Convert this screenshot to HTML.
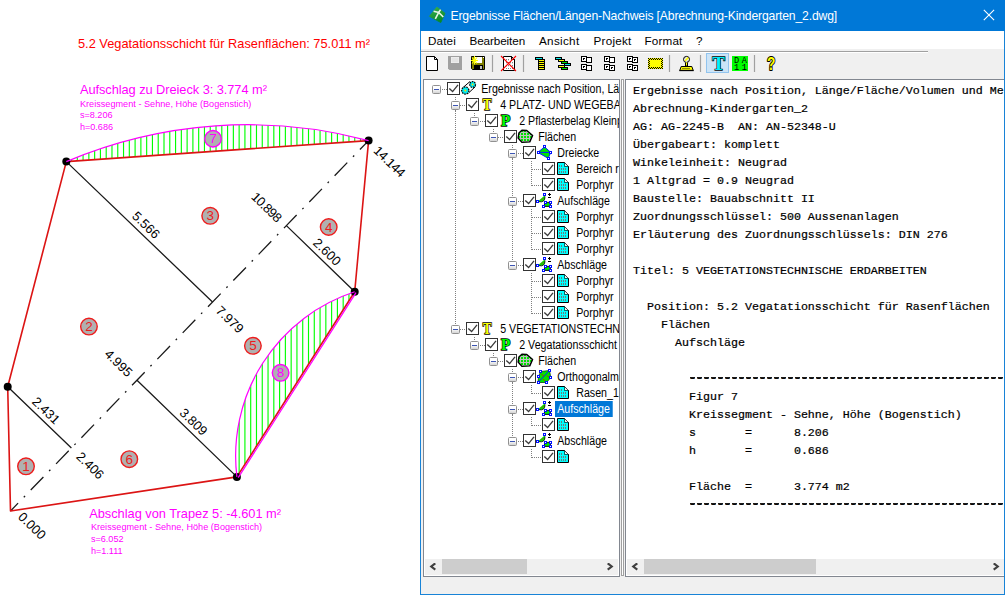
<!DOCTYPE html>
<html lang="de"><head><meta charset="utf-8"><title>Ergebnisse Flächen/Längen-Nachweis</title>
<style>
html,body{margin:0;padding:0;background:#fff;}
body{width:1005px;height:595px;position:relative;overflow:hidden;font-family:"Liberation Sans",sans-serif;}
#win{position:absolute;left:420px;top:0;width:585px;height:595px;background:#f0f0f0;box-sizing:border-box;border:1px solid #1883d7;border-top:none;}
#title{position:absolute;left:-1px;top:0;width:585px;height:31px;background:#0078d7;color:#fff;}
#title span{position:absolute;left:30.5px;top:9px;font-size:12.2px;white-space:nowrap;letter-spacing:-0.17px}
#menu{position:absolute;left:0;top:31px;width:583px;height:18px;background:#fff;font-size:11.7px;letter-spacing:-0.1px;color:#000;}
#menu span{position:absolute;top:3px;white-space:nowrap}

#tree{position:absolute;left:-421px;top:0;width:0;height:0}
#treepane{position:absolute;left:2px;top:79px;width:197px;height:498px;background:#fff;border:1px solid #828790;box-sizing:border-box;overflow:hidden}
#treepane #tree{left:-424px;top:-80px}
#tree i{position:absolute;display:block}
#tree .vl{width:1px;background:repeating-linear-gradient(to bottom,#808080 0 1px,transparent 1px 2px)}
#tree .hl{height:1px;background:repeating-linear-gradient(to right,#808080 0 1px,transparent 1px 2px)}
#tree .ex{width:7px;height:7px;border:1px solid #919191;background:linear-gradient(#fff 40%,#d4d4d4);border-radius:1.5px}
#tree .ex:after{content:"";position:absolute;left:1px;top:3px;width:5px;height:1px;background:#3c55b4}
#tree .cb,#tree .ic{position:absolute}
#tree .tt{position:absolute;font-size:12px;line-height:16px;height:16px;padding:0 2.8px 0 2.5px;white-space:nowrap;color:#000;transform:scaleX(.888);transform-origin:0 0}
#tree .tt.sel{background:#0078d7;color:#fff}
#rpane{position:absolute;left:204px;top:79px;width:379px;height:498px;background:#fff;border:1px solid #828790;border-right:none;box-sizing:border-box;overflow:hidden}
#rpane pre{margin:0;position:absolute;left:7px;top:2.2px;font-family:"Liberation Mono",monospace;font-size:11.667px;line-height:18px;color:#000;-webkit-text-stroke:0.22px #000;}
#rpane .dl{display:inline-block;height:18px;vertical-align:top;position:relative;top:-0.8px;background:repeating-linear-gradient(to right,transparent 0 0.8px,#1a1a1a 0.8px 6.2px,transparent 6.2px 7px) 0 8.1px/100% 1.5px no-repeat}
.hsb{position:absolute;height:16px;background:#f0f0f0}
.hsb b{position:absolute;top:0;height:15px;background:#cdcdcd}
.hsb svg{position:absolute;top:4px}
#split{position:absolute;left:199px;top:79px;width:5px;height:498px;background:#f0f0f0}
#split:before{content:"";position:absolute;left:1px;top:0;width:1px;height:495px;background:#fff;border:1px solid #a0a0a0}
</style></head><body>
<svg id="dwg" width="420" height="595" viewBox="0 0 420 595" style="position:absolute;left:0;top:0">
<defs>
<clipPath id="c7"><path d="M66.3,161.6 A466.3,466.3 0 0 1 368.6,140.6 Z"/></clipPath>
<clipPath id="c8"><path d="M236.9,476.9 A172.8,172.8 0 0 1 354.7,291.8 Z"/></clipPath>
</defs>
<path d="M-38.30,100V500M-32.52,100V500M-26.74,100V500M-20.96,100V500M-15.18,100V500M-9.40,100V500M-3.62,100V500M2.16,100V500M7.94,100V500M13.72,100V500M19.50,100V500M25.28,100V500M31.06,100V500M36.84,100V500M42.62,100V500M48.40,100V500M54.18,100V500M59.96,100V500M65.74,100V500M71.52,100V500M77.30,100V500M83.08,100V500M88.86,100V500M94.64,100V500M100.42,100V500M106.20,100V500M111.98,100V500M117.76,100V500M123.54,100V500M129.32,100V500M135.10,100V500M140.88,100V500M146.66,100V500M152.44,100V500M158.22,100V500M164.00,100V500M169.78,100V500M175.56,100V500M181.34,100V500M187.12,100V500M192.90,100V500M198.68,100V500M204.46,100V500M210.24,100V500M216.02,100V500M221.80,100V500M227.58,100V500M233.36,100V500M239.14,100V500M244.92,100V500M250.70,100V500M256.48,100V500M262.26,100V500M268.04,100V500M273.82,100V500M279.60,100V500M285.38,100V500M291.16,100V500M296.94,100V500M302.72,100V500M308.50,100V500M314.28,100V500M320.06,100V500M325.84,100V500M331.62,100V500M337.40,100V500M343.18,100V500M348.96,100V500M354.74,100V500M360.52,100V500M366.30,100V500M372.08,100V500M377.86,100V500M383.64,100V500M389.42,100V500M395.20,100V500M400.98,100V500M406.76,100V500M412.54,100V500M418.32,100V500" stroke="#00ff00" stroke-width="1.15" fill="none" clip-path="url(#c7)"/>
<path d="M-38.30,100V500M-32.52,100V500M-26.74,100V500M-20.96,100V500M-15.18,100V500M-9.40,100V500M-3.62,100V500M2.16,100V500M7.94,100V500M13.72,100V500M19.50,100V500M25.28,100V500M31.06,100V500M36.84,100V500M42.62,100V500M48.40,100V500M54.18,100V500M59.96,100V500M65.74,100V500M71.52,100V500M77.30,100V500M83.08,100V500M88.86,100V500M94.64,100V500M100.42,100V500M106.20,100V500M111.98,100V500M117.76,100V500M123.54,100V500M129.32,100V500M135.10,100V500M140.88,100V500M146.66,100V500M152.44,100V500M158.22,100V500M164.00,100V500M169.78,100V500M175.56,100V500M181.34,100V500M187.12,100V500M192.90,100V500M198.68,100V500M204.46,100V500M210.24,100V500M216.02,100V500M221.80,100V500M227.58,100V500M233.36,100V500M239.14,100V500M244.92,100V500M250.70,100V500M256.48,100V500M262.26,100V500M268.04,100V500M273.82,100V500M279.60,100V500M285.38,100V500M291.16,100V500M296.94,100V500M302.72,100V500M308.50,100V500M314.28,100V500M320.06,100V500M325.84,100V500M331.62,100V500M337.40,100V500M343.18,100V500M348.96,100V500M354.74,100V500M360.52,100V500M366.30,100V500M372.08,100V500M377.86,100V500M383.64,100V500M389.42,100V500M395.20,100V500M400.98,100V500M406.76,100V500M412.54,100V500M418.32,100V500" stroke="#00ff00" stroke-width="1.15" fill="none" clip-path="url(#c8)"/>
<path d="M7.7,386.8L71.4,448.0 M66.3,161.6L212.5,302.0 M236.9,476.9L137.0,380.2 M354.7,291.8L286.4,225.6" stroke="#1a1a1a" stroke-width="1.3" fill="none"/>
<path d="M10.5,511.0L368.6,140.6" stroke="#1a1a1a" stroke-width="1.3" fill="none" stroke-dasharray="18.21 8.21 1.8 8.21" stroke-dashoffset="7.3"/>
<path d="M10.5,511.0L7.7,386.8L66.3,161.6L368.6,140.6L354.7,291.8L236.9,476.9Z" stroke="#dc1414" stroke-width="1.6" fill="none" stroke-linejoin="round"/>
<circle cx="66.3" cy="161.6" r="4" fill="#000"/>
<circle cx="368.6" cy="140.6" r="4" fill="#000"/>
<circle cx="354.7" cy="291.8" r="4" fill="#000"/>
<circle cx="236.9" cy="476.9" r="4" fill="#000"/>
<circle cx="7.7" cy="386.8" r="4" fill="#000"/>
<path d="M66.3,161.6 A466.3,466.3 0 0 1 368.6,140.6" stroke="#ff00ff" stroke-width="1.2" fill="none"/>
<path d="M236.9,476.9 A172.8,172.8 0 0 1 354.7,291.8" stroke="#ff00ff" stroke-width="1.2" fill="none"/>
<path d="M238.20000000000002,477.7 L356.0,292.6" stroke="#ff00ff" stroke-width="1.3" fill="none"/>
<circle cx="26.0" cy="466.3" r="8.3" fill="#b0b0b0" stroke="#ee1c1c" stroke-width="1.4"/>
<text x="26.0" y="470.80" text-anchor="middle" font-family="Liberation Sans, sans-serif" font-size="13.5" fill="#ee1c1c">1</text>
<circle cx="129.3" cy="459.2" r="8.3" fill="#b0b0b0" stroke="#ee1c1c" stroke-width="1.4"/>
<text x="129.3" y="463.70" text-anchor="middle" font-family="Liberation Sans, sans-serif" font-size="13.5" fill="#ee1c1c">6</text>
<circle cx="88.95" cy="326.6" r="8.3" fill="#b0b0b0" stroke="#ee1c1c" stroke-width="1.4"/>
<text x="88.95" y="331.10" text-anchor="middle" font-family="Liberation Sans, sans-serif" font-size="13.5" fill="#ee1c1c">2</text>
<circle cx="210.2" cy="215.8" r="8.3" fill="#b0b0b0" stroke="#ee1c1c" stroke-width="1.4"/>
<text x="210.2" y="220.30" text-anchor="middle" font-family="Liberation Sans, sans-serif" font-size="13.5" fill="#ee1c1c">3</text>
<circle cx="328.7" cy="227" r="8.3" fill="#b0b0b0" stroke="#ee1c1c" stroke-width="1.4"/>
<text x="328.7" y="231.50" text-anchor="middle" font-family="Liberation Sans, sans-serif" font-size="13.5" fill="#ee1c1c">4</text>
<circle cx="252.9" cy="345.8" r="8.3" fill="#b0b0b0" stroke="#ee1c1c" stroke-width="1.4"/>
<text x="252.9" y="350.30" text-anchor="middle" font-family="Liberation Sans, sans-serif" font-size="13.5" fill="#ee1c1c">5</text>
<circle cx="213" cy="138.75" r="8.3" fill="#b0b0b0" stroke="#ff00ff" stroke-width="1.4"/>
<text x="213" y="143.25" text-anchor="middle" font-family="Liberation Sans, sans-serif" font-size="13.5" fill="#ff00ff">7</text>
<circle cx="280.6" cy="372.8" r="8.3" fill="#b0b0b0" stroke="#ff00ff" stroke-width="1.4"/>
<text x="280.6" y="377.30" text-anchor="middle" font-family="Liberation Sans, sans-serif" font-size="13.5" fill="#ff00ff">8</text>
<text transform="translate(43.0,413.8) rotate(44.03)" text-anchor="middle" font-family="Liberation Sans, sans-serif" font-size="13" fill="#000">2.431</text>
<text transform="translate(142.9,228.2) rotate(44.03)" text-anchor="middle" font-family="Liberation Sans, sans-serif" font-size="13" fill="#000">5.566</text>
<text transform="translate(190.4,425.0) rotate(44.03)" text-anchor="middle" font-family="Liberation Sans, sans-serif" font-size="13" fill="#000">3.809</text>
<text transform="translate(324.0,255.1) rotate(44.03)" text-anchor="middle" font-family="Liberation Sans, sans-serif" font-size="13" fill="#000">2.600</text>
<!--stations-->
<text transform="translate(17.3,517.7) rotate(44.03)" text-anchor="start" font-family="Liberation Sans, sans-serif" font-size="13" fill="#000">0.000</text>
<text transform="translate(75.4,457.4) rotate(44.03)" text-anchor="start" font-family="Liberation Sans, sans-serif" font-size="13" fill="#000">2.406</text>
<text transform="translate(215.0,311.4) rotate(44.03)" text-anchor="start" font-family="Liberation Sans, sans-serif" font-size="13" fill="#000">7.979</text>
<text transform="translate(372.7,151.5) rotate(44.03)" text-anchor="start" font-family="Liberation Sans, sans-serif" font-size="13" fill="#000" textLength="38.3" lengthAdjust="spacing">14.144</text>
<text transform="translate(127.2,377.7) rotate(44.03)" text-anchor="end" font-family="Liberation Sans, sans-serif" font-size="13" fill="#000">4.995</text>
<text transform="translate(276.7,223.2) rotate(44.03)" text-anchor="end" font-family="Liberation Sans, sans-serif" font-size="13" fill="#000" textLength="36.6" lengthAdjust="spacing">10.898</text>
<text x="78" y="47.6" font-family="Liberation Sans, sans-serif" font-size="12.8" fill="#ff0000" textLength="292" lengthAdjust="spacing">5.2 Vegatationsschicht für Rasenflächen: 75.011 m²</text>
<text x="79.9" y="94.3" font-family="Liberation Sans, sans-serif" font-size="12.8" fill="#ff00ff" textLength="187" lengthAdjust="spacing">Aufschlag zu Dreieck 3: 3.774 m²</text>
<text x="79.9" y="106.7" font-family="Liberation Sans, sans-serif" font-size="9.1" fill="#ff00ff" textLength="171.4" lengthAdjust="spacing">Kreissegment - Sehne, Höhe (Bogenstich)</text>
<text x="79.9" y="118.4" font-family="Liberation Sans, sans-serif" font-size="9.1" fill="#ff00ff">s=8.206</text>
<text x="79.9" y="130.4" font-family="Liberation Sans, sans-serif" font-size="9.1" fill="#ff00ff">h=0.686</text>
<text x="89.2" y="517.5" font-family="Liberation Sans, sans-serif" font-size="12.8" fill="#ff00ff" textLength="191.8" lengthAdjust="spacing">Abschlag von Trapez 5: -4.601 m²</text>
<text x="90.9" y="529.9" font-family="Liberation Sans, sans-serif" font-size="9.1" fill="#ff00ff" textLength="171.2" lengthAdjust="spacing">Kreissegment - Sehne, Höhe (Bogenstich)</text>
<text x="90.9" y="541.6" font-family="Liberation Sans, sans-serif" font-size="9.1" fill="#ff00ff">s=6.052</text>
<text x="90.9" y="553.6" font-family="Liberation Sans, sans-serif" font-size="9.1" fill="#ff00ff">h=1.111</text>
</svg>
<div id="win">
<div id="title"><svg style="position:absolute;left:0;top:0" width="40" height="31" viewBox="420 0 40 31"><defs><linearGradient id="gi" x1="0" y1="0" x2="0.4" y2="1"><stop offset="0" stop-color="#3cb050"/><stop offset="1" stop-color="#0a8a26"/></linearGradient></defs><path d="M436.9,7L445,13.3L440.8,22.6L429.4,16.3Z" fill="url(#gi)" stroke="url(#gi)" stroke-width="0.8" stroke-linejoin="round"/><path d="M433.6,11.2L438.7,12.4L443.3,17M440.6,9.6L438.7,12.4L435.3,18.9" stroke="#e8f4e8" stroke-width="1.6" fill="none"/></svg><span>Ergebnisse Flächen/Längen-Nachweis [Abrechnung-Kindergarten_2.dwg]</span>
<svg style="position:absolute;left:563px;top:9px" width="13" height="13" viewBox="0 0 13 13"><path d="M0.8,0.8L11.1,11.1M11.1,0.8L0.8,11.1" stroke="#fff" stroke-width="1.1"/></svg>
</div>
<div id="menu"><span style="left:7px;letter-spacing:.14px">Datei</span><span style="left:48.5px">Bearbeiten</span><span style="left:118px;letter-spacing:.3px">Ansicht</span><span style="left:172.5px;letter-spacing:.23px">Projekt</span><span style="left:223.5px;letter-spacing:.17px">Format</span><span style="left:275px">?</span></div>
<svg id="tbsvg" width="583" height="30" viewBox="421 49 583 30" style="position:absolute;left:0;top:49px">
<path d="M421,51.5H928" stroke="#a0a0a0" stroke-width="1"/><path d="M421,52.5H928" stroke="#fff" stroke-width="1"/>
<path d="M492.5,55V72" stroke="#a0a0a0" stroke-width="1.2"/>
<path d="M523.5,55V72" stroke="#a0a0a0" stroke-width="1.2"/>
<path d="M669.5,55V72" stroke="#a0a0a0" stroke-width="1.2"/>
<path d="M700.5,55V72" stroke="#a0a0a0" stroke-width="1.2"/>
<path d="M754.5,55V72" stroke="#a0a0a0" stroke-width="1.2"/>
<path d="M426.5,56.5H434.5L437.5,59.5V70.5H426.5Z" fill="#fff" stroke="#000"/><path d="M434.5,56.5V59.5H437.5" fill="none" stroke="#000"/>
<path d="M448,56H462V70H449.5L448,68.5Z" fill="#a0a0a0"/><rect x="451" y="57" width="8" height="6" fill="#f4f4f4"/><rect x="451.5" y="57.5" width="7" height="5" fill="#e4e4e4"/>
<path d="M471.5,56.5H484.5V69.5H472.5L471.5,68.5Z" fill="#808000" stroke="#000"/><rect x="474.5" y="57" width="7.5" height="6" fill="#fff"/><rect x="474" y="65" width="9" height="5" fill="#000"/><rect x="480" y="66" width="2" height="3" fill="#c0c0c0"/><rect x="483" y="57" width="1" height="1" fill="#fff"/>
<path d="M471,60.5H478M474.5,56V64.5M472,57.5L477,63.5M477,57.5L472,63.5" stroke="#ffff00" stroke-width="1.1"/>
<path d="M503.5,56.5H511.5L514.5,59.5V70.5H503.5Z" fill="#fff" stroke="#000"/><path d="M511.5,56.5V59.5H514.5Z" fill="#c0c0c0" stroke="#000" stroke-linejoin="round"/>
<path d="M506.5,59V69M508.5,59V69M510.5,62V69M512.5,62V69" stroke="#808080" stroke-width="1" stroke-dasharray="1.3 1.7"/>
<path d="M501,56L516,71M516,56L501,71" stroke="#ff0000" stroke-width="1.1"/>
<g shape-rendering="crispEdges">
<rect x="538" y="59" width="7" height="11" fill="#000"/><rect x="535" y="57" width="8" height="3" fill="#000"/><rect x="536" y="58" width="6" height="1" fill="#00e8e8"/>
<rect x="539" y="60" width="5" height="1" fill="#ffff00"/>
<rect x="539" y="62" width="5" height="1" fill="#ffff00"/>
<rect x="539" y="64" width="5" height="1" fill="#ffff00"/>
<rect x="539" y="66" width="5" height="1" fill="#ffff00"/>
<rect x="539" y="68" width="5" height="1" fill="#ffff00"/>
<rect x="555" y="57" width="7" height="3" fill="#000"/>
<rect x="558" y="59" width="7" height="3" fill="#000"/>
<rect x="561" y="61" width="7" height="3" fill="#000"/>
<rect x="564" y="63" width="7" height="3" fill="#000"/>
<rect x="558" y="65" width="7" height="3" fill="#000"/>
<rect x="561" y="67" width="7" height="3" fill="#000"/>
<rect x="556" y="58" width="5" height="1" fill="#00e8e8"/>
<rect x="559" y="60" width="5" height="1" fill="#ffff00"/>
<rect x="562" y="62" width="5" height="1" fill="#00e000"/>
<rect x="565" y="64" width="5" height="1" fill="#00e8e8"/>
<rect x="559" y="66" width="5" height="1" fill="#ffff00"/>
<rect x="562" y="68" width="5" height="1" fill="#00e000"/>
<rect x="581" y="56" width="6" height="6" fill="#000"/><rect x="582" y="57" width="4" height="4" fill="#fff"/><rect x="586" y="57" width="6" height="6" fill="#000"/><rect x="587" y="58" width="4" height="4" fill="#fff"/><rect x="581" y="64" width="6" height="6" fill="#000"/><rect x="582" y="65" width="4" height="4" fill="#fff"/><rect x="586" y="65" width="6" height="6" fill="#000"/><rect x="587" y="66" width="4" height="4" fill="#fff"/><rect x="583" y="58" width="2" height="1" fill="#000"/><rect x="583" y="59" width="1" height="1" fill="#000"/><rect x="583" y="66" width="2" height="1" fill="#000"/><rect x="583" y="67" width="1" height="1" fill="#000"/>
<rect x="604" y="56" width="6" height="6" fill="#000"/><rect x="605" y="57" width="4" height="4" fill="#fff"/><rect x="609" y="57" width="6" height="6" fill="#000"/><rect x="610" y="58" width="4" height="4" fill="#fff"/><rect x="604" y="64" width="6" height="6" fill="#000"/><rect x="605" y="65" width="4" height="4" fill="#fff"/><rect x="609" y="65" width="6" height="6" fill="#000"/><rect x="610" y="66" width="4" height="4" fill="#fff"/><rect x="606" y="58" width="2" height="1" fill="#000"/><rect x="606" y="59" width="1" height="1" fill="#000"/><rect x="606" y="66" width="2" height="1" fill="#000"/><rect x="606" y="67" width="1" height="1" fill="#000"/><rect x="611" y="67" width="2" height="1" fill="#000"/><rect x="611" y="68" width="1" height="1" fill="#000"/>
<rect x="627" y="56" width="6" height="6" fill="#000"/><rect x="628" y="57" width="4" height="4" fill="#fff"/><rect x="632" y="57" width="6" height="6" fill="#000"/><rect x="633" y="58" width="4" height="4" fill="#fff"/><rect x="627" y="64" width="6" height="6" fill="#000"/><rect x="628" y="65" width="4" height="4" fill="#fff"/><rect x="632" y="65" width="6" height="6" fill="#000"/><rect x="633" y="66" width="4" height="4" fill="#fff"/><rect x="629" y="58" width="2" height="1" fill="#000"/><rect x="629" y="59" width="1" height="1" fill="#000"/><rect x="634" y="59" width="2" height="1" fill="#000"/><rect x="634" y="60" width="1" height="1" fill="#000"/><rect x="629" y="66" width="2" height="1" fill="#000"/><rect x="629" y="67" width="1" height="1" fill="#000"/><rect x="634" y="67" width="2" height="1" fill="#000"/><rect x="634" y="68" width="1" height="1" fill="#000"/>
</g>
<defs><pattern id="chk" x="648" y="58" width="2" height="2" patternUnits="userSpaceOnUse"><rect width="2" height="2" fill="#ffff00"/><rect width="1" height="1" fill="#000"/><rect x="1" y="1" width="1" height="1" fill="#000"/></pattern></defs>
<g shape-rendering="crispEdges"><rect x="648" y="58" width="15" height="11" fill="url(#chk)"/><rect x="650" y="60" width="11" height="7" fill="#ffff00"/></g>
<circle cx="686.5" cy="59.4" r="3" fill="#e8e8e8" stroke="#000" stroke-width="1"/><path d="M685,61L688.2,57.6" stroke="#ffff00" stroke-width="1.6"/><path d="M685.5,62.5V66H687.5V62.5" fill="#ffff00" stroke="#000" stroke-width="1"/><path d="M681.2,66.5H691.8L693.2,70.3H679.8Z" fill="#ffff00" stroke="#000" stroke-width="1" stroke-linejoin="round"/><path d="M682.5,68.4H690.5" stroke="#000" stroke-width="1" stroke-dasharray="1 1"/><path d="M679.3,70.6H693.7" stroke="#000" stroke-width="1.1"/>
<rect x="706.5" y="53.5" width="22" height="19" fill="#cce4f7" stroke="#92c4ee"/>
<text transform="translate(718.5,69.6) scale(1.06,1)" text-anchor="middle" font-family="Liberation Serif, serif" font-weight="bold" font-size="18" fill="#00f0ff" stroke="#000" stroke-width="1.25" paint-order="stroke">T</text>
<rect x="732" y="56" width="16" height="15" fill="#00ff00"/><text x="734" y="62.7" font-family="Liberation Mono, monospace" font-size="8.6" fill="#000" textLength="13" lengthAdjust="spacing">DA</text><text x="734" y="69.7" font-family="Liberation Mono, monospace" font-size="8.6" fill="#000" textLength="13" lengthAdjust="spacing">11</text>
<text transform="translate(771.1,69.9) scale(0.78,1)" text-anchor="middle" font-family="Liberation Sans, sans-serif" font-weight="bold" font-size="17.5" fill="#ffff00" stroke="#000" stroke-width="2" paint-order="stroke" stroke-linejoin="round">?</text>
</svg>
<div id="treepane"><div id="tree">
<i class="hl" style="left:441px;top:89px;width:6px;background-position:1px 0"></i>
<i class="vl" style="left:455px;top:97px;height:4px;background-position:0 0px"></i>
<i class="vl" style="left:455px;top:110px;height:215px;background-position:0 1px"></i>
<i class="hl" style="left:460px;top:105px;width:6px;background-position:0px 0"></i>
<i class="vl" style="left:474px;top:113px;height:4px;background-position:0 0px"></i>
<i class="hl" style="left:479px;top:121px;width:6px;background-position:1px 0"></i>
<i class="vl" style="left:493px;top:129px;height:4px;background-position:0 0px"></i>
<i class="hl" style="left:498px;top:137px;width:6px;background-position:0px 0"></i>
<i class="vl" style="left:512px;top:145px;height:4px;background-position:0 0px"></i>
<i class="vl" style="left:512px;top:158px;height:39px;background-position:0 1px"></i>
<i class="vl" style="left:512px;top:206px;height:55px;background-position:0 1px"></i>
<i class="hl" style="left:517px;top:153px;width:6px;background-position:1px 0"></i>
<i class="vl" style="left:531px;top:161px;height:9px;background-position:0 0px"></i>
<i class="vl" style="left:531px;top:170px;height:16px;background-position:0 1px"></i>
<i class="hl" style="left:531px;top:169px;width:11px;background-position:1px 0"></i>
<i class="hl" style="left:531px;top:185px;width:11px;background-position:1px 0"></i>
<i class="hl" style="left:517px;top:201px;width:6px;background-position:1px 0"></i>
<i class="vl" style="left:531px;top:209px;height:9px;background-position:0 0px"></i>
<i class="vl" style="left:531px;top:218px;height:16px;background-position:0 1px"></i>
<i class="vl" style="left:531px;top:234px;height:16px;background-position:0 1px"></i>
<i class="hl" style="left:531px;top:217px;width:11px;background-position:1px 0"></i>
<i class="hl" style="left:531px;top:233px;width:11px;background-position:1px 0"></i>
<i class="hl" style="left:531px;top:249px;width:11px;background-position:1px 0"></i>
<i class="hl" style="left:517px;top:265px;width:6px;background-position:1px 0"></i>
<i class="vl" style="left:531px;top:273px;height:9px;background-position:0 0px"></i>
<i class="vl" style="left:531px;top:282px;height:16px;background-position:0 1px"></i>
<i class="vl" style="left:531px;top:298px;height:16px;background-position:0 1px"></i>
<i class="hl" style="left:531px;top:281px;width:11px;background-position:1px 0"></i>
<i class="hl" style="left:531px;top:297px;width:11px;background-position:1px 0"></i>
<i class="hl" style="left:531px;top:313px;width:11px;background-position:1px 0"></i>
<i class="hl" style="left:460px;top:329px;width:6px;background-position:0px 0"></i>
<i class="vl" style="left:474px;top:337px;height:4px;background-position:0 0px"></i>
<i class="hl" style="left:479px;top:345px;width:6px;background-position:1px 0"></i>
<i class="vl" style="left:493px;top:353px;height:4px;background-position:0 0px"></i>
<i class="hl" style="left:498px;top:361px;width:6px;background-position:0px 0"></i>
<i class="vl" style="left:512px;top:369px;height:4px;background-position:0 0px"></i>
<i class="vl" style="left:512px;top:382px;height:23px;background-position:0 1px"></i>
<i class="vl" style="left:512px;top:414px;height:23px;background-position:0 1px"></i>
<i class="hl" style="left:517px;top:377px;width:6px;background-position:1px 0"></i>
<i class="vl" style="left:531px;top:385px;height:9px;background-position:0 0px"></i>
<i class="hl" style="left:531px;top:393px;width:11px;background-position:1px 0"></i>
<i class="hl" style="left:517px;top:409px;width:6px;background-position:1px 0"></i>
<i class="vl" style="left:531px;top:417px;height:9px;background-position:0 0px"></i>
<i class="hl" style="left:531px;top:425px;width:11px;background-position:1px 0"></i>
<i class="hl" style="left:517px;top:441px;width:6px;background-position:1px 0"></i>
<i class="vl" style="left:531px;top:449px;height:9px;background-position:0 0px"></i>
<i class="hl" style="left:531px;top:457px;width:11px;background-position:1px 0"></i>
<i class="ex" style="left:432px;top:85px"></i>
<svg class="cb" style="left:447px;top:82px" width="13" height="13" viewBox="0 0 13 13"><rect x="0.5" y="0.5" width="12" height="12" fill="#fff" stroke="#333"/><path d="M2.3,6.6L5.6,9.6L11,2.9" fill="none" stroke="#3a3a3a" stroke-width="1.35"/></svg>
<svg class="ic" style="left:461px;top:81px" width="16" height="16" viewBox="0 0 16 16" overflow="visible"><path d="M1.5,7L9,0.5M7.5,12L14.5,5.5" stroke="#000" stroke-width="1"/><circle cx="4.3" cy="9.5" r="3.6" fill="#00e8f0" stroke="#000" stroke-width="1.2" stroke-dasharray="1.6 0.9"/><circle cx="4.3" cy="9.5" r="1" fill="#ffe000"/><circle cx="11.6" cy="3.5" r="2.9" fill="#00e8f0" stroke="#000" stroke-width="1.2" stroke-dasharray="1.6 0.9"/><circle cx="11.6" cy="3.5" r="0.9" fill="#ffe000"/></svg>
<span class="tt" style="left:479.0px;top:81px">Ergebnisse nach Position, Lä</span>
<i class="ex" style="left:451px;top:101px"></i>
<svg class="cb" style="left:466px;top:98px" width="13" height="13" viewBox="0 0 13 13"><rect x="0.5" y="0.5" width="12" height="12" fill="#fff" stroke="#333"/><path d="M2.3,6.6L5.6,9.6L11,2.9" fill="none" stroke="#3a3a3a" stroke-width="1.35"/></svg>
<svg class="ic" style="left:480px;top:97px" width="16" height="16" viewBox="0 0 16 16" overflow="visible"><text transform="translate(7.05,13.1) scale(0.84,1)" text-anchor="middle" font-family="Liberation Serif, serif" font-weight="bold" font-size="15.7" fill="#ffff00" stroke="#000" stroke-width="1.4" paint-order="stroke">T</text></svg>
<span class="tt" style="left:498.0px;top:97px">4 PLATZ- UND WEGEBA</span>
<i class="ex" style="left:470px;top:117px"></i>
<svg class="cb" style="left:485px;top:114px" width="13" height="13" viewBox="0 0 13 13"><rect x="0.5" y="0.5" width="12" height="12" fill="#fff" stroke="#333"/><path d="M2.3,6.6L5.6,9.6L11,2.9" fill="none" stroke="#3a3a3a" stroke-width="1.35"/></svg>
<svg class="ic" style="left:499px;top:113px" width="16" height="16" viewBox="0 0 16 16" overflow="visible"><text transform="translate(6.7,13.1) scale(0.97,1)" text-anchor="middle" font-family="Liberation Serif, serif" font-weight="bold" font-size="15.7" fill="#00ff00" stroke="#000" stroke-width="1.4" paint-order="stroke">P</text></svg>
<span class="tt" style="left:517.0px;top:113px">2 Pflasterbelag Kleinp</span>
<i class="ex" style="left:489px;top:133px"></i>
<svg class="cb" style="left:504px;top:130px" width="13" height="13" viewBox="0 0 13 13"><rect x="0.5" y="0.5" width="12" height="12" fill="#fff" stroke="#333"/><path d="M2.3,6.6L5.6,9.6L11,2.9" fill="none" stroke="#3a3a3a" stroke-width="1.35"/></svg>
<svg class="ic" style="left:518px;top:129px" width="16" height="16" viewBox="0 0 16 16" overflow="visible"><clipPath id="cp4"><path d="M0.9,4L3.9,1.2L8.8,1.5L14.6,6.5L11.8,12.9L3.9,13.4L0.1,9Z"/></clipPath><path d="M0.9,4L3.9,1.2L8.8,1.5L14.6,6.5L11.8,12.9L3.9,13.4L0.1,9Z" fill="#00e400"/><path d="M0,3.5H16M0,6.5H16M0,9.5H16M0,12.5H16M2.5,0V16M5.5,0V16M8.5,0V16M11.5,0V16" stroke="#c0c0c0" stroke-width="1" clip-path="url(#cp4)"/><path d="M0.9,4L3.9,1.2L8.8,1.5L14.6,6.5L11.8,12.9L3.9,13.4L0.1,9Z" fill="none" stroke="#000" stroke-width="1.4" stroke-linejoin="round"/></svg>
<span class="tt" style="left:536.0px;top:129px">Flächen</span>
<i class="ex" style="left:508px;top:149px"></i>
<svg class="cb" style="left:523px;top:146px" width="13" height="13" viewBox="0 0 13 13"><rect x="0.5" y="0.5" width="12" height="12" fill="#fff" stroke="#333"/><path d="M2.3,6.6L5.6,9.6L11,2.9" fill="none" stroke="#3a3a3a" stroke-width="1.35"/></svg>
<svg class="ic" style="left:537px;top:145px" width="16" height="16" viewBox="0 0 16 16" overflow="visible"><path d="M0.8,7.4L7.6,1.9L13.7,7.4L11.2,13.3Z" fill="#00e400" stroke="#0020ff" stroke-width="1"/><path d="M0.8,7.4H13.7" stroke="#0020ff" stroke-width="1"/><rect x="0.5" y="6.5" width="2" height="2" fill="#fff" stroke="#0010ff" stroke-width="1"/><rect x="6.5" y="0.5" width="2" height="2" fill="#fff" stroke="#0010ff" stroke-width="1"/><rect x="12.5" y="6.5" width="2" height="2" fill="#fff" stroke="#0010ff" stroke-width="1"/><rect x="10.5" y="12.5" width="2" height="2" fill="#fff" stroke="#0010ff" stroke-width="1"/></svg>
<span class="tt" style="left:555.0px;top:145px">Dreiecke</span>
<svg class="cb" style="left:542px;top:162px" width="13" height="13" viewBox="0 0 13 13"><rect x="0.5" y="0.5" width="12" height="12" fill="#fff" stroke="#333"/><path d="M2.3,6.6L5.6,9.6L11,2.9" fill="none" stroke="#3a3a3a" stroke-width="1.35"/></svg>
<svg class="ic" style="left:556px;top:161px" width="16" height="16" viewBox="0 0 16 16" overflow="visible"><path d="M1.5,1.5H8.5L12.5,5.5V13.5H1.5Z" fill="#00ffff" stroke="#000" stroke-width="1"/><path d="M9,2.2V5H11.8Z" fill="#f0f0f0"/><path d="M8.5,1.5V5.5H12.5" fill="none" stroke="#000" stroke-width="0.6"/><path d="M3.5,4V12M5.5,4V12M7.5,7V12M9.5,7V12" stroke="#6c7c7c" stroke-width="1" stroke-dasharray="2 1" shape-rendering="crispEdges"/></svg>
<span class="tt" style="left:574.0px;top:161px">Bereich r</span>
<svg class="cb" style="left:542px;top:178px" width="13" height="13" viewBox="0 0 13 13"><rect x="0.5" y="0.5" width="12" height="12" fill="#fff" stroke="#333"/><path d="M2.3,6.6L5.6,9.6L11,2.9" fill="none" stroke="#3a3a3a" stroke-width="1.35"/></svg>
<svg class="ic" style="left:556px;top:177px" width="16" height="16" viewBox="0 0 16 16" overflow="visible"><path d="M1.5,1.5H8.5L12.5,5.5V13.5H1.5Z" fill="#00ffff" stroke="#000" stroke-width="1"/><path d="M9,2.2V5H11.8Z" fill="#f0f0f0"/><path d="M8.5,1.5V5.5H12.5" fill="none" stroke="#000" stroke-width="0.6"/><path d="M3.5,4V12M5.5,4V12M7.5,7V12M9.5,7V12" stroke="#6c7c7c" stroke-width="1" stroke-dasharray="2 1" shape-rendering="crispEdges"/></svg>
<span class="tt" style="left:574.0px;top:177px">Porphyr</span>
<i class="ex" style="left:508px;top:197px"></i>
<svg class="cb" style="left:523px;top:194px" width="13" height="13" viewBox="0 0 13 13"><rect x="0.5" y="0.5" width="12" height="12" fill="#fff" stroke="#333"/><path d="M2.3,6.6L5.6,9.6L11,2.9" fill="none" stroke="#3a3a3a" stroke-width="1.35"/></svg>
<svg class="ic" style="left:537px;top:193px" width="16" height="16" viewBox="0 0 16 16" overflow="visible"><path d="M1.6,7.8L7.3,2.8L8,3.4Q8.2,10 1.8,8.6Z" fill="#00e400"/><path d="M8,3.4Q8.2,10 1.8,8.6" fill="none" stroke="#000" stroke-width="0.8"/><path d="M4.3,6.3L5,7.4M5.7,5.1L6.5,6.1" stroke="#f00000" stroke-width="0.7"/><path d="M8.5,9.4L13.4,9.4L13.4,13.4L6.5,13.4Z" fill="#00e400" stroke="#000" stroke-width="0.9"/><rect x="-0.5" y="7.5" width="2" height="2" fill="#fff" stroke="#0010ff" stroke-width="1"/><rect x="6.5" y="0.5" width="2" height="2" fill="#fff" stroke="#0010ff" stroke-width="1"/><rect x="7.5" y="8.5" width="2" height="2" fill="#fff" stroke="#0010ff" stroke-width="1"/><rect x="12.5" y="8.5" width="2" height="2" fill="#fff" stroke="#0010ff" stroke-width="1"/><rect x="5.5" y="12.5" width="2" height="2" fill="#fff" stroke="#0010ff" stroke-width="1"/><rect x="12.5" y="12.5" width="2" height="2" fill="#fff" stroke="#0010ff" stroke-width="1"/><path d="M11,1.5H14M12.5,0V3M11,4.5H14" stroke="#000" stroke-width="1"/></svg>
<span class="tt" style="left:555.0px;top:193px">Aufschläge</span>
<svg class="cb" style="left:542px;top:210px" width="13" height="13" viewBox="0 0 13 13"><rect x="0.5" y="0.5" width="12" height="12" fill="#fff" stroke="#333"/><path d="M2.3,6.6L5.6,9.6L11,2.9" fill="none" stroke="#3a3a3a" stroke-width="1.35"/></svg>
<svg class="ic" style="left:556px;top:209px" width="16" height="16" viewBox="0 0 16 16" overflow="visible"><path d="M1.5,1.5H8.5L12.5,5.5V13.5H1.5Z" fill="#00ffff" stroke="#000" stroke-width="1"/><path d="M9,2.2V5H11.8Z" fill="#f0f0f0"/><path d="M8.5,1.5V5.5H12.5" fill="none" stroke="#000" stroke-width="0.6"/><path d="M3.5,4V12M5.5,4V12M7.5,7V12M9.5,7V12" stroke="#6c7c7c" stroke-width="1" stroke-dasharray="2 1" shape-rendering="crispEdges"/></svg>
<span class="tt" style="left:574.0px;top:209px">Porphyr</span>
<svg class="cb" style="left:542px;top:226px" width="13" height="13" viewBox="0 0 13 13"><rect x="0.5" y="0.5" width="12" height="12" fill="#fff" stroke="#333"/><path d="M2.3,6.6L5.6,9.6L11,2.9" fill="none" stroke="#3a3a3a" stroke-width="1.35"/></svg>
<svg class="ic" style="left:556px;top:225px" width="16" height="16" viewBox="0 0 16 16" overflow="visible"><path d="M1.5,1.5H8.5L12.5,5.5V13.5H1.5Z" fill="#00ffff" stroke="#000" stroke-width="1"/><path d="M9,2.2V5H11.8Z" fill="#f0f0f0"/><path d="M8.5,1.5V5.5H12.5" fill="none" stroke="#000" stroke-width="0.6"/><path d="M3.5,4V12M5.5,4V12M7.5,7V12M9.5,7V12" stroke="#6c7c7c" stroke-width="1" stroke-dasharray="2 1" shape-rendering="crispEdges"/></svg>
<span class="tt" style="left:574.0px;top:225px">Porphyr</span>
<svg class="cb" style="left:542px;top:242px" width="13" height="13" viewBox="0 0 13 13"><rect x="0.5" y="0.5" width="12" height="12" fill="#fff" stroke="#333"/><path d="M2.3,6.6L5.6,9.6L11,2.9" fill="none" stroke="#3a3a3a" stroke-width="1.35"/></svg>
<svg class="ic" style="left:556px;top:241px" width="16" height="16" viewBox="0 0 16 16" overflow="visible"><path d="M1.5,1.5H8.5L12.5,5.5V13.5H1.5Z" fill="#00ffff" stroke="#000" stroke-width="1"/><path d="M9,2.2V5H11.8Z" fill="#f0f0f0"/><path d="M8.5,1.5V5.5H12.5" fill="none" stroke="#000" stroke-width="0.6"/><path d="M3.5,4V12M5.5,4V12M7.5,7V12M9.5,7V12" stroke="#6c7c7c" stroke-width="1" stroke-dasharray="2 1" shape-rendering="crispEdges"/></svg>
<span class="tt" style="left:574.0px;top:241px">Porphyr</span>
<i class="ex" style="left:508px;top:261px"></i>
<svg class="cb" style="left:523px;top:258px" width="13" height="13" viewBox="0 0 13 13"><rect x="0.5" y="0.5" width="12" height="12" fill="#fff" stroke="#333"/><path d="M2.3,6.6L5.6,9.6L11,2.9" fill="none" stroke="#3a3a3a" stroke-width="1.35"/></svg>
<svg class="ic" style="left:537px;top:257px" width="16" height="16" viewBox="0 0 16 16" overflow="visible"><path d="M1.6,7.8L7.3,2.8L8,3.4Q8.2,10 1.8,8.6Z" fill="#00e400"/><path d="M8,3.4Q8.2,10 1.8,8.6" fill="none" stroke="#000" stroke-width="0.8"/><path d="M4.3,6.3L5,7.4M5.7,5.1L6.5,6.1" stroke="#f00000" stroke-width="0.7"/><path d="M8.5,9.4L13.4,9.4L13.4,13.4L6.5,13.4Z" fill="#00e400" stroke="#000" stroke-width="0.9"/><rect x="-0.5" y="7.5" width="2" height="2" fill="#fff" stroke="#0010ff" stroke-width="1"/><rect x="6.5" y="0.5" width="2" height="2" fill="#fff" stroke="#0010ff" stroke-width="1"/><rect x="7.5" y="8.5" width="2" height="2" fill="#fff" stroke="#0010ff" stroke-width="1"/><rect x="12.5" y="8.5" width="2" height="2" fill="#fff" stroke="#0010ff" stroke-width="1"/><rect x="5.5" y="12.5" width="2" height="2" fill="#fff" stroke="#0010ff" stroke-width="1"/><rect x="12.5" y="12.5" width="2" height="2" fill="#fff" stroke="#0010ff" stroke-width="1"/><path d="M11,1.5H14M12.5,0V3M11,4.5H14" stroke="#000" stroke-width="1"/></svg>
<span class="tt" style="left:555.0px;top:257px">Abschläge</span>
<svg class="cb" style="left:542px;top:274px" width="13" height="13" viewBox="0 0 13 13"><rect x="0.5" y="0.5" width="12" height="12" fill="#fff" stroke="#333"/><path d="M2.3,6.6L5.6,9.6L11,2.9" fill="none" stroke="#3a3a3a" stroke-width="1.35"/></svg>
<svg class="ic" style="left:556px;top:273px" width="16" height="16" viewBox="0 0 16 16" overflow="visible"><path d="M1.5,1.5H8.5L12.5,5.5V13.5H1.5Z" fill="#00ffff" stroke="#000" stroke-width="1"/><path d="M9,2.2V5H11.8Z" fill="#f0f0f0"/><path d="M8.5,1.5V5.5H12.5" fill="none" stroke="#000" stroke-width="0.6"/><path d="M3.5,4V12M5.5,4V12M7.5,7V12M9.5,7V12" stroke="#6c7c7c" stroke-width="1" stroke-dasharray="2 1" shape-rendering="crispEdges"/></svg>
<span class="tt" style="left:574.0px;top:273px">Porphyr</span>
<svg class="cb" style="left:542px;top:290px" width="13" height="13" viewBox="0 0 13 13"><rect x="0.5" y="0.5" width="12" height="12" fill="#fff" stroke="#333"/><path d="M2.3,6.6L5.6,9.6L11,2.9" fill="none" stroke="#3a3a3a" stroke-width="1.35"/></svg>
<svg class="ic" style="left:556px;top:289px" width="16" height="16" viewBox="0 0 16 16" overflow="visible"><path d="M1.5,1.5H8.5L12.5,5.5V13.5H1.5Z" fill="#00ffff" stroke="#000" stroke-width="1"/><path d="M9,2.2V5H11.8Z" fill="#f0f0f0"/><path d="M8.5,1.5V5.5H12.5" fill="none" stroke="#000" stroke-width="0.6"/><path d="M3.5,4V12M5.5,4V12M7.5,7V12M9.5,7V12" stroke="#6c7c7c" stroke-width="1" stroke-dasharray="2 1" shape-rendering="crispEdges"/></svg>
<span class="tt" style="left:574.0px;top:289px">Porphyr</span>
<svg class="cb" style="left:542px;top:306px" width="13" height="13" viewBox="0 0 13 13"><rect x="0.5" y="0.5" width="12" height="12" fill="#fff" stroke="#333"/><path d="M2.3,6.6L5.6,9.6L11,2.9" fill="none" stroke="#3a3a3a" stroke-width="1.35"/></svg>
<svg class="ic" style="left:556px;top:305px" width="16" height="16" viewBox="0 0 16 16" overflow="visible"><path d="M1.5,1.5H8.5L12.5,5.5V13.5H1.5Z" fill="#00ffff" stroke="#000" stroke-width="1"/><path d="M9,2.2V5H11.8Z" fill="#f0f0f0"/><path d="M8.5,1.5V5.5H12.5" fill="none" stroke="#000" stroke-width="0.6"/><path d="M3.5,4V12M5.5,4V12M7.5,7V12M9.5,7V12" stroke="#6c7c7c" stroke-width="1" stroke-dasharray="2 1" shape-rendering="crispEdges"/></svg>
<span class="tt" style="left:574.0px;top:305px">Porphyr</span>
<i class="ex" style="left:451px;top:325px"></i>
<svg class="cb" style="left:466px;top:322px" width="13" height="13" viewBox="0 0 13 13"><rect x="0.5" y="0.5" width="12" height="12" fill="#fff" stroke="#333"/><path d="M2.3,6.6L5.6,9.6L11,2.9" fill="none" stroke="#3a3a3a" stroke-width="1.35"/></svg>
<svg class="ic" style="left:480px;top:321px" width="16" height="16" viewBox="0 0 16 16" overflow="visible"><text transform="translate(7.05,13.1) scale(0.84,1)" text-anchor="middle" font-family="Liberation Serif, serif" font-weight="bold" font-size="15.7" fill="#ffff00" stroke="#000" stroke-width="1.4" paint-order="stroke">T</text></svg>
<span class="tt" style="left:498.0px;top:321px">5 VEGETATIONSTECHN</span>
<i class="ex" style="left:470px;top:341px"></i>
<svg class="cb" style="left:485px;top:338px" width="13" height="13" viewBox="0 0 13 13"><rect x="0.5" y="0.5" width="12" height="12" fill="#fff" stroke="#333"/><path d="M2.3,6.6L5.6,9.6L11,2.9" fill="none" stroke="#3a3a3a" stroke-width="1.35"/></svg>
<svg class="ic" style="left:499px;top:337px" width="16" height="16" viewBox="0 0 16 16" overflow="visible"><text transform="translate(6.7,13.1) scale(0.97,1)" text-anchor="middle" font-family="Liberation Serif, serif" font-weight="bold" font-size="15.7" fill="#00ff00" stroke="#000" stroke-width="1.4" paint-order="stroke">P</text></svg>
<span class="tt" style="left:517.0px;top:337px">2 Vegatationsschicht</span>
<i class="ex" style="left:489px;top:357px"></i>
<svg class="cb" style="left:504px;top:354px" width="13" height="13" viewBox="0 0 13 13"><rect x="0.5" y="0.5" width="12" height="12" fill="#fff" stroke="#333"/><path d="M2.3,6.6L5.6,9.6L11,2.9" fill="none" stroke="#3a3a3a" stroke-width="1.35"/></svg>
<svg class="ic" style="left:518px;top:353px" width="16" height="16" viewBox="0 0 16 16" overflow="visible"><clipPath id="cp18"><path d="M0.9,4L3.9,1.2L8.8,1.5L14.6,6.5L11.8,12.9L3.9,13.4L0.1,9Z"/></clipPath><path d="M0.9,4L3.9,1.2L8.8,1.5L14.6,6.5L11.8,12.9L3.9,13.4L0.1,9Z" fill="#00e400"/><path d="M0,3.5H16M0,6.5H16M0,9.5H16M0,12.5H16M2.5,0V16M5.5,0V16M8.5,0V16M11.5,0V16" stroke="#c0c0c0" stroke-width="1" clip-path="url(#cp18)"/><path d="M0.9,4L3.9,1.2L8.8,1.5L14.6,6.5L11.8,12.9L3.9,13.4L0.1,9Z" fill="none" stroke="#000" stroke-width="1.4" stroke-linejoin="round"/></svg>
<span class="tt" style="left:536.0px;top:353px">Flächen</span>
<i class="ex" style="left:508px;top:373px"></i>
<svg class="cb" style="left:523px;top:370px" width="13" height="13" viewBox="0 0 13 13"><rect x="0.5" y="0.5" width="12" height="12" fill="#fff" stroke="#333"/><path d="M2.3,6.6L5.6,9.6L11,2.9" fill="none" stroke="#3a3a3a" stroke-width="1.35"/></svg>
<svg class="ic" style="left:537px;top:369px" width="16" height="16" viewBox="0 0 16 16" overflow="visible"><path d="M3.6,2.5L12.5,1.5L13.8,8.4L9.6,13.5L1,13.5L1.5,7.7Z" fill="#00e400" stroke="#003000" stroke-width="0.7"/><path d="M1,13.5L12.5,1.5" stroke="#0020ff" stroke-width="1"/><path d="M4.5,5L7,7.5M10,6.5L12,8.5M6,10L8,12" stroke="#f00000" stroke-width="0.8"/><rect x="2.5" y="1.5" width="2" height="2" fill="#fff" stroke="#0010ff" stroke-width="1"/><rect x="11.5" y="0.5" width="2" height="2" fill="#fff" stroke="#0010ff" stroke-width="1"/><rect x="12.5" y="7.5" width="2" height="2" fill="#fff" stroke="#0010ff" stroke-width="1"/><rect x="8.5" y="12.5" width="2" height="2" fill="#fff" stroke="#0010ff" stroke-width="1"/><rect x="0.5" y="12.5" width="2" height="2" fill="#fff" stroke="#0010ff" stroke-width="1"/><rect x="0.5" y="6.5" width="2" height="2" fill="#fff" stroke="#0010ff" stroke-width="1"/></svg>
<span class="tt" style="left:555.0px;top:369px">Orthogonalma</span>
<svg class="cb" style="left:542px;top:386px" width="13" height="13" viewBox="0 0 13 13"><rect x="0.5" y="0.5" width="12" height="12" fill="#fff" stroke="#333"/><path d="M2.3,6.6L5.6,9.6L11,2.9" fill="none" stroke="#3a3a3a" stroke-width="1.35"/></svg>
<svg class="ic" style="left:556px;top:385px" width="16" height="16" viewBox="0 0 16 16" overflow="visible"><path d="M1.5,1.5H8.5L12.5,5.5V13.5H1.5Z" fill="#00ffff" stroke="#000" stroke-width="1"/><path d="M9,2.2V5H11.8Z" fill="#f0f0f0"/><path d="M8.5,1.5V5.5H12.5" fill="none" stroke="#000" stroke-width="0.6"/><path d="M3.5,4V12M5.5,4V12M7.5,7V12M9.5,7V12" stroke="#6c7c7c" stroke-width="1" stroke-dasharray="2 1" shape-rendering="crispEdges"/></svg>
<span class="tt" style="left:574.0px;top:385px">Rasen_1</span>
<i class="ex" style="left:508px;top:405px"></i>
<svg class="cb" style="left:523px;top:402px" width="13" height="13" viewBox="0 0 13 13"><rect x="0.5" y="0.5" width="12" height="12" fill="#fff" stroke="#333"/><path d="M2.3,6.6L5.6,9.6L11,2.9" fill="none" stroke="#3a3a3a" stroke-width="1.35"/></svg>
<svg class="ic" style="left:537px;top:401px" width="16" height="16" viewBox="0 0 16 16" overflow="visible"><path d="M1.6,7.8L7.3,2.8L8,3.4Q8.2,10 1.8,8.6Z" fill="#00e400"/><path d="M8,3.4Q8.2,10 1.8,8.6" fill="none" stroke="#000" stroke-width="0.8"/><path d="M4.3,6.3L5,7.4M5.7,5.1L6.5,6.1" stroke="#f00000" stroke-width="0.7"/><path d="M8.5,9.4L13.4,9.4L13.4,13.4L6.5,13.4Z" fill="#00e400" stroke="#000" stroke-width="0.9"/><rect x="-0.5" y="7.5" width="2" height="2" fill="#fff" stroke="#0010ff" stroke-width="1"/><rect x="6.5" y="0.5" width="2" height="2" fill="#fff" stroke="#0010ff" stroke-width="1"/><rect x="7.5" y="8.5" width="2" height="2" fill="#fff" stroke="#0010ff" stroke-width="1"/><rect x="12.5" y="8.5" width="2" height="2" fill="#fff" stroke="#0010ff" stroke-width="1"/><rect x="5.5" y="12.5" width="2" height="2" fill="#fff" stroke="#0010ff" stroke-width="1"/><rect x="12.5" y="12.5" width="2" height="2" fill="#fff" stroke="#0010ff" stroke-width="1"/><path d="M11,1.5H14M12.5,0V3M11,4.5H14" stroke="#000" stroke-width="1"/></svg>
<span class="tt sel" style="left:555.0px;top:401px">Aufschläge</span>
<svg class="cb" style="left:542px;top:418px" width="13" height="13" viewBox="0 0 13 13"><rect x="0.5" y="0.5" width="12" height="12" fill="#fff" stroke="#333"/><path d="M2.3,6.6L5.6,9.6L11,2.9" fill="none" stroke="#3a3a3a" stroke-width="1.35"/></svg>
<svg class="ic" style="left:556px;top:417px" width="16" height="16" viewBox="0 0 16 16" overflow="visible"><path d="M1.5,1.5H8.5L12.5,5.5V13.5H1.5Z" fill="#00ffff" stroke="#000" stroke-width="1"/><path d="M9,2.2V5H11.8Z" fill="#f0f0f0"/><path d="M8.5,1.5V5.5H12.5" fill="none" stroke="#000" stroke-width="0.6"/><path d="M3.5,4V12M5.5,4V12M7.5,7V12M9.5,7V12" stroke="#6c7c7c" stroke-width="1" stroke-dasharray="2 1" shape-rendering="crispEdges"/></svg>
<i class="ex" style="left:508px;top:437px"></i>
<svg class="cb" style="left:523px;top:434px" width="13" height="13" viewBox="0 0 13 13"><rect x="0.5" y="0.5" width="12" height="12" fill="#fff" stroke="#333"/><path d="M2.3,6.6L5.6,9.6L11,2.9" fill="none" stroke="#3a3a3a" stroke-width="1.35"/></svg>
<svg class="ic" style="left:537px;top:433px" width="16" height="16" viewBox="0 0 16 16" overflow="visible"><path d="M1.6,7.8L7.3,2.8L8,3.4Q8.2,10 1.8,8.6Z" fill="#00e400"/><path d="M8,3.4Q8.2,10 1.8,8.6" fill="none" stroke="#000" stroke-width="0.8"/><path d="M4.3,6.3L5,7.4M5.7,5.1L6.5,6.1" stroke="#f00000" stroke-width="0.7"/><path d="M8.5,9.4L13.4,9.4L13.4,13.4L6.5,13.4Z" fill="#00e400" stroke="#000" stroke-width="0.9"/><rect x="-0.5" y="7.5" width="2" height="2" fill="#fff" stroke="#0010ff" stroke-width="1"/><rect x="6.5" y="0.5" width="2" height="2" fill="#fff" stroke="#0010ff" stroke-width="1"/><rect x="7.5" y="8.5" width="2" height="2" fill="#fff" stroke="#0010ff" stroke-width="1"/><rect x="12.5" y="8.5" width="2" height="2" fill="#fff" stroke="#0010ff" stroke-width="1"/><rect x="5.5" y="12.5" width="2" height="2" fill="#fff" stroke="#0010ff" stroke-width="1"/><rect x="12.5" y="12.5" width="2" height="2" fill="#fff" stroke="#0010ff" stroke-width="1"/><path d="M11,1.5H14M12.5,0V3M11,4.5H14" stroke="#000" stroke-width="1"/></svg>
<span class="tt" style="left:555.0px;top:433px">Abschläge</span>
<svg class="cb" style="left:542px;top:450px" width="13" height="13" viewBox="0 0 13 13"><rect x="0.5" y="0.5" width="12" height="12" fill="#fff" stroke="#333"/><path d="M2.3,6.6L5.6,9.6L11,2.9" fill="none" stroke="#3a3a3a" stroke-width="1.35"/></svg>
<svg class="ic" style="left:556px;top:449px" width="16" height="16" viewBox="0 0 16 16" overflow="visible"><path d="M1.5,1.5H8.5L12.5,5.5V13.5H1.5Z" fill="#00ffff" stroke="#000" stroke-width="1"/><path d="M9,2.2V5H11.8Z" fill="#f0f0f0"/><path d="M8.5,1.5V5.5H12.5" fill="none" stroke="#000" stroke-width="0.6"/><path d="M3.5,4V12M5.5,4V12M7.5,7V12M9.5,7V12" stroke="#6c7c7c" stroke-width="1" stroke-dasharray="2 1" shape-rendering="crispEdges"/></svg>
</div>
<div class="hsb" style="left:1px;bottom:1px;width:193px"><b style="left:17px;width:85px"></b><svg style="left:4px" width="8" height="8" viewBox="0 0 8 8"><path d="M6.3,0.3L2.2,3.5L6.3,6.7" fill="none" stroke="#404040" stroke-width="2.1"/></svg><svg style="right:4px" width="8" height="8" viewBox="0 0 8 8"><path d="M1.7,0.3L5.8,3.5L1.7,6.7" fill="none" stroke="#404040" stroke-width="2.1"/></svg></div>
</div>
<div id="split"></div>
<div id="rpane"><pre>Ergebnisse nach Position, Länge/Fläche/Volumen und Me
Abrechnung-Kindergarten_2
AG: AG-2245-B  AN: AN-52348-U
Übergabeart: komplett
Winkeleinheit: Neugrad
1 Altgrad = 0.9 Neugrad
Baustelle: Bauabschnitt II
Zuordnungsschlüssel: 500 Aussenanlagen
Erläuterung des Zuordnungsschlüssels: DIN 276

Titel: 5 VEGETATIONSTECHNISCHE ERDARBEITEN

  Position: 5.2 Vegatationsschicht für Rasenflächen
    Flächen
      Aufschläge

        <span class="dl">------------------------------------------------------------</span>
        Figur 7
        Kreissegment - Sehne, Höhe (Bogenstich)
        s       =      8.206
        h       =      0.686

        Fläche  =      3.774 m2
        <span class="dl">------------------------------------------------------------</span></pre>
<div class="hsb" style="left:1px;bottom:1px;width:377px"><b style="left:17px;width:172px"></b><svg style="left:4px" width="8" height="8" viewBox="0 0 8 8"><path d="M6.3,0.3L2.2,3.5L6.3,6.7" fill="none" stroke="#404040" stroke-width="2.1"/></svg><svg style="right:4px" width="8" height="8" viewBox="0 0 8 8"><path d="M1.7,0.3L5.8,3.5L1.7,6.7" fill="none" stroke="#404040" stroke-width="2.1"/></svg></div>
</div>
</div>
</body></html>
